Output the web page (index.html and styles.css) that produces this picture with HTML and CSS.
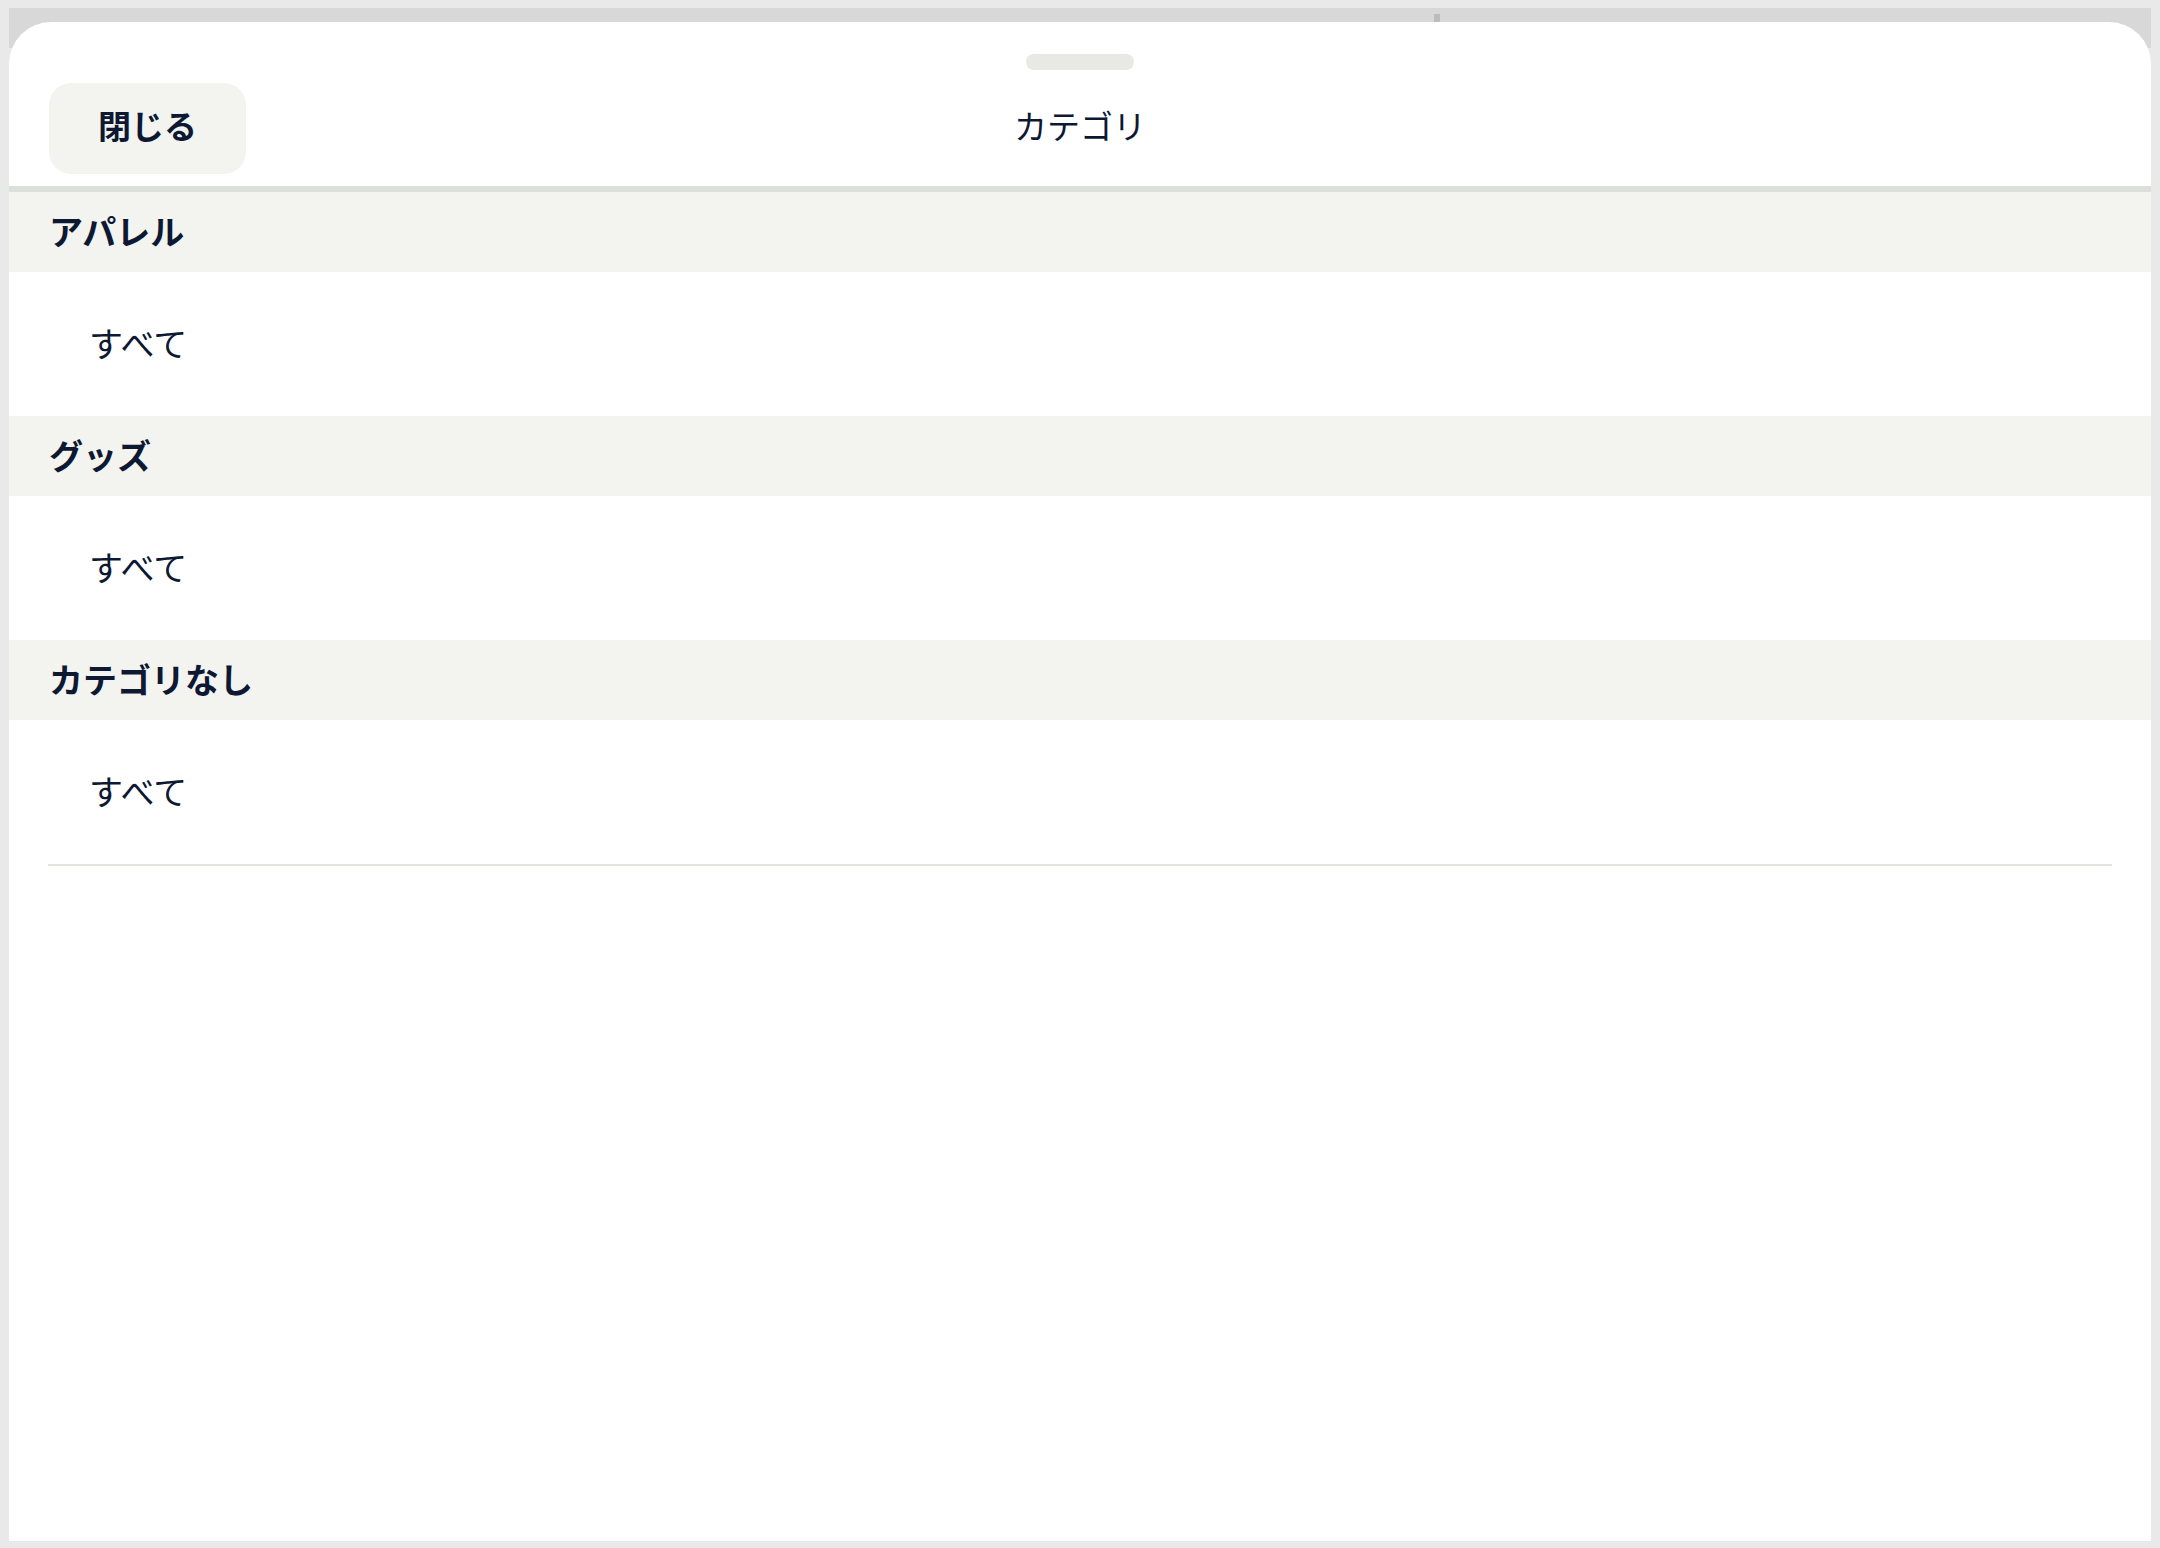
FILE: index.html
```html
<!DOCTYPE html>
<html lang="ja">
<head>
<meta charset="utf-8">
<title>カテゴリ</title>
<link rel="stylesheet" href="styles.css">
</head>
<body>
<div class="backdrop">
  <div class="backdrop-band"><span class="tick"></span></div>
  <div class="sheet">
    <div class="sheet-head">
      <div class="handle"></div>
      <div class="head-row">
        <button class="close-btn">閉じる</button>
        <div class="title">カテゴリ</div>
        <div class="spacer"></div>
      </div>
    </div>
    <div class="list">
      <div class="section-title">アパレル</div>
      <div class="item">すべて</div>
      <div class="section-title">グッズ</div>
      <div class="item">すべて</div>
      <div class="section-title">カテゴリなし</div>
      <div class="item">すべて</div>
      <div class="divider"></div>
    </div>
  </div>
</div>
</body>
</html>
```
FILE: styles.css
```css
html, body {
  margin: 0;
  padding: 0;
  background: #e9e9e9;
  height: 100%;
}
body {
  font-family: "Noto Sans CJK JP", "Noto Sans", sans-serif;
  color: #0d1833;
}
.backdrop {
  box-sizing: border-box;
  height: 1548px;
  padding: 8px 9px 7px 9px;
  display: flex;
  flex-direction: column;
}
.backdrop-band {
  position: relative;
  height: 40px;
  margin-bottom: -26px;
  background: #d8d8d8;
  flex: none;
}
.tick {
  position: absolute;
  left: 1425px;
  top: 6px;
  width: 6px;
  height: 8px;
  background: #bcbcbc;
}
.sheet {
  position: relative;
  flex: 1;
  background: #ffffff;
  border-radius: 42px 42px 0 0;
  display: flex;
  flex-direction: column;
}
.sheet-head {
  padding: 32px 40px 12px 40px;
  border-bottom: 6px solid #dcdfda;
  display: flex;
  flex-direction: column;
  align-items: center;
}
.handle {
  width: 108px;
  height: 16px;
  border-radius: 8px;
  background: #e8e8e4;
}
.head-row {
  align-self: stretch;
  margin-top: 13px;
  display: grid;
  grid-template-columns: 197px 1fr 197px;
  align-items: center;
}
.close-btn {
  box-sizing: border-box;
  width: 197px;
  height: 91px;
  border: none;
  border-radius: 22px;
  background: #f3f3ef;
  font-family: inherit;
  font-size: 33px;
  font-weight: 700;
  line-height: 1;
  color: #0d1833;
  padding: 0 0 6px 0;
  cursor: pointer;
}
.title {
  text-align: center;
  font-size: 33px;
  font-weight: 400;
  line-height: 1;
  padding-bottom: 6px;
}
.list {
  display: flex;
  flex-direction: column;
}
.section-title {
  height: 80px;
  box-sizing: border-box;
  padding: 0 40px 2px 40px;
  display: flex;
  align-items: center;
  background: #f3f3ef;
  font-size: 34px;
  font-weight: 700;
  line-height: 1;
}
.item {
  height: 144px;
  box-sizing: border-box;
  padding: 0 80px 2px 80px;
  display: flex;
  align-items: center;
  font-size: 34px;
  font-weight: 400;
  line-height: 1;
}
.divider {
  margin: 0 39px;
  height: 2px;
  background: #e3e3df;
}
```
